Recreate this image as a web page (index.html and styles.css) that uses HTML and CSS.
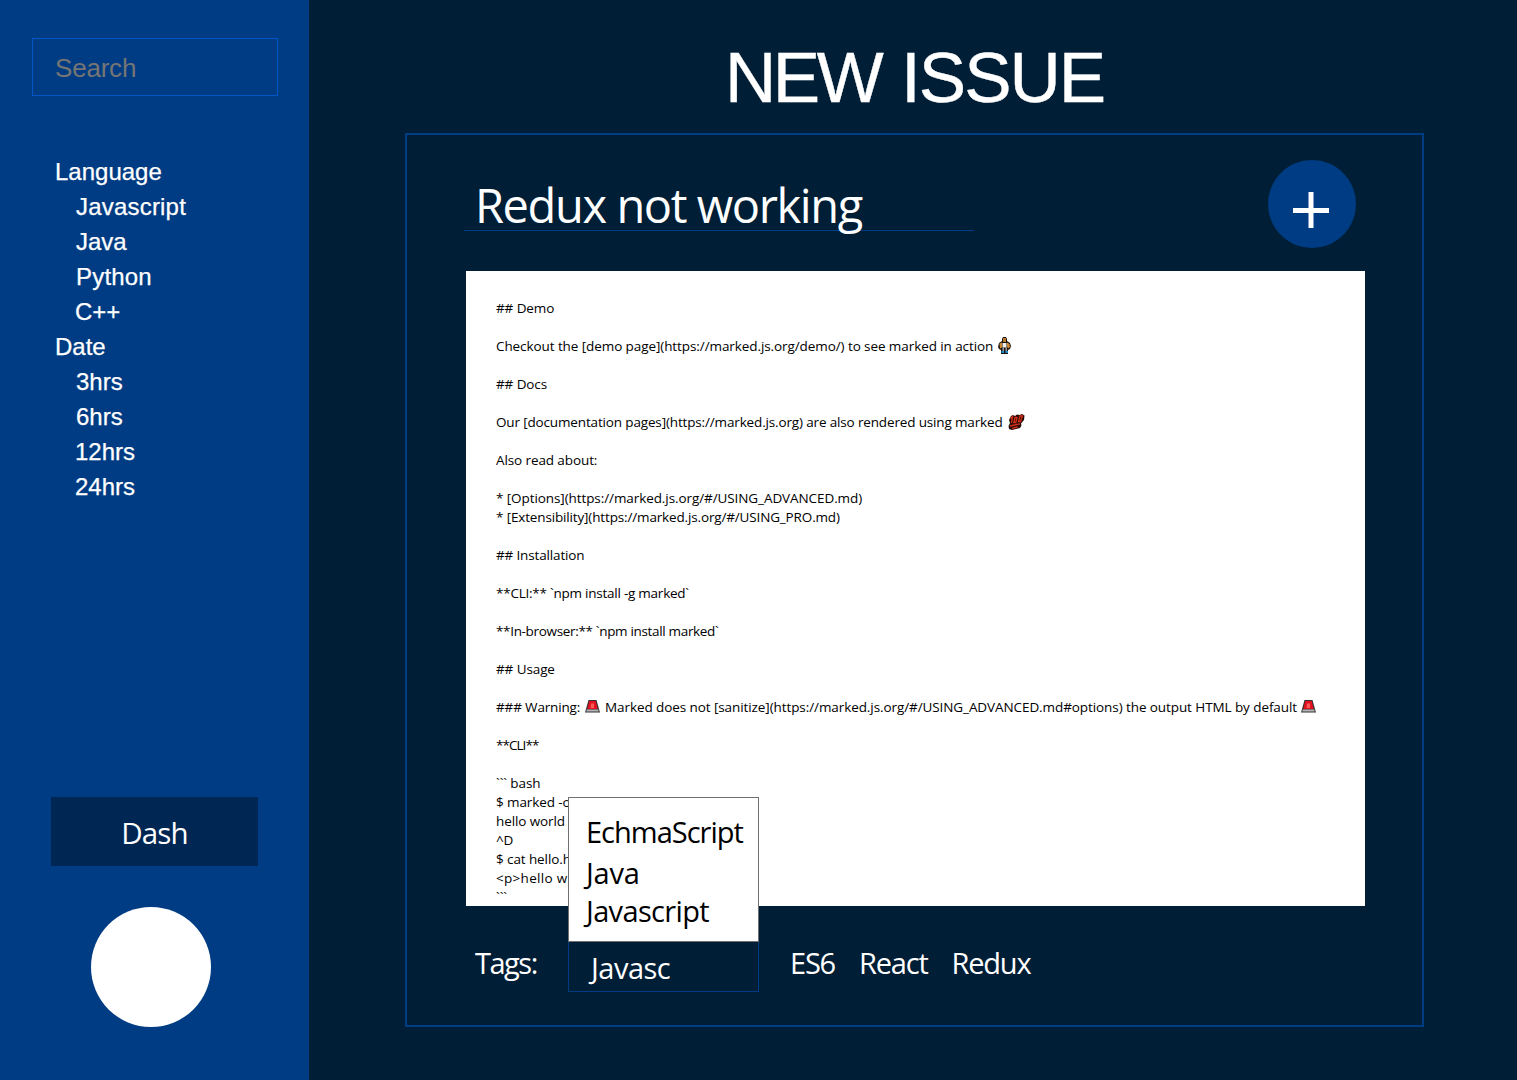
FILE: index.html
```html
<!DOCTYPE html>
<html lang="en">
<head>
<meta charset="utf-8">
<title>New Issue</title>
<link rel="stylesheet" href="styles.css">
</head>
<body>
<aside class="sidebar">
  <div class="search">Search</div>
  <nav class="filters">
    <span>Language</span>
    <a class="wide">Javascript</a>
    <a>Java</a>
    <a class="wide">Python</a>
    <a class="flush">C++</a>
    <span>Date</span>
    <a>3hrs</a>
    <a>6hrs</a>
    <a class="flush">12hrs</a>
    <a class="flush">24hrs</a>
  </nav>
  <div class="dash">Dash</div>
  <div class="avatar"></div>
</aside>
<main class="main">
  <h1 class="heading"><span class="heading-first">NEW</span> ISSUE</h1>
  <section class="panel">
    <header class="panel-head">
      <div class="issue-title">Redux not working</div>
      <div class="add">
        <svg width="88" height="88" viewBox="0 0 88 88"><path d="M25 50.500h36M43 32v36" stroke="#fff" stroke-width="5" fill="none"/></svg>
      </div>
    </header>
    <div class="editor">
      <p>## Demo</p>
      <p></p>
      <p class="t1">Checkout the [demo page](https://marked.js.org/demo/) to see marked in action <svg class="emoji man" viewBox="0 0 13 17"><path d="M5 0h3l1 2v2l3 2 1 3-1 3-2 1v4H3v-4l-2-1-1-2 1-4 3-2V2z" fill="#1a1410"/><path d="M5 1h3v4H5z" fill="#b9772c"/><path d="M1.500 6.500L4 5.500v5l-2 1zM9 5.500l2.500 1.500.5 3-2 1.500-1-2z" fill="#d08a30"/><path d="M4.500 6h4v4.500h-4z" fill="#f0eee8"/><path d="M4.500 10.500h1.500V14H4.500zM7.500 10.500H9V14H7.500z" fill="#999"/><path d="M3.500 14H6v2H3.500zM7.500 14H10v2H7.500z" fill="#1c8fc9"/></svg></p>
      <p></p>
      <p>## Docs</p>
      <p></p>
      <p class="t2">Our [documentation pages](https://marked.js.org) are also rendered using marked <svg class="emoji hundred" viewBox="0 0 17 16"><path d="M3 2l2-1 2 1 2-1.500L11.500 1 14 0l2.500 1.500L16 6l-3 3.500.5 2L12 14l-8 2-3-1-.5-3L2 9 1 6z" fill="#260b06"/><path d="M2.500 4.500L4.500 2.500 3.500 9M7 3.500L5.800 8.500h2l1.200-5zM12 2l-1.500 5.500h2L14.500 2zM2 12l10-2.200M4 14.300l5.500-1.300" stroke="#d8301b" stroke-width="1.300" fill="none"/></svg></p>
      <p></p>
      <p>Also read about:</p>
      <p></p>
      <p class="t1">* [Options](https://marked.js.org/#/USING_ADVANCED.md)</p>
      <p class="t2">* [Extensibility](https://marked.js.org/#/USING_PRO.md)</p>
      <p></p>
      <p class="t2">## Installation</p>
      <p></p>
      <p class="t3">**CLI:** `npm install -g marked`</p>
      <p></p>
      <p class="t4">**In-browser:** `npm install marked`</p>
      <p></p>
      <p>## Usage</p>
      <p></p>
      <p class="t1"><span class="t2">### Warning:</span> <svg class="emoji siren" viewBox="0 0 15 13"><path d="M3.500 0h8l2.500 9 1 3.500H0L1 9z" fill="#333"/><path d="M4.300 1h6.400L12.700 9H2.300z" fill="#e3101f"/><path d="M6 3.500h3V8H5.500z" fill="#ff5a58"/><path d="M1.700 9.500h11.600l.4 2H1.300z" fill="#b5b5b5"/></svg> Marked does not [sanitize](https://marked.js.org/#/USING_ADVANCED.md#options) the output HTML by default <svg class="emoji siren" viewBox="0 0 15 13"><path d="M3.500 0h8l2.500 9 1 3.500H0L1 9z" fill="#333"/><path d="M4.300 1h6.400L12.700 9H2.300z" fill="#e3101f"/><path d="M6 3.500h3V8H5.500z" fill="#ff5a58"/><path d="M1.700 9.500h11.600l.4 2H1.300z" fill="#b5b5b5"/></svg></p>
      <p></p>
      <p class="t5">**CLI**</p>
      <p></p>
      <p>``` bash</p>
      <p>$ marked -o</p>
      <p>hello world</p>
      <p>^D</p>
      <p>$ cat hello.h</p>
      <p class="t6">&lt;p&gt;hello w</p>
      <p>```</p>
    </div>
    <footer class="tags">
      <span class="tags-label">Tags:</span>
      <div class="tag-field">
        Javasc
        <div class="menu">
          <span class="menu-ecma">EchmaScript</span>
          <span class="menu-java">Java</span>
          <span class="menu-js">Javascript</span>
        </div>
      </div>
      <div class="tag-list"><span>ES6</span><span>React</span><span>Redux</span></div>
    </footer>
  </section>
</main>
</body>
</html>
```
FILE: styles.css
```css
* { box-sizing: border-box; }
body {
  margin: 0;
  height: 1080px;
  display: flex;
  overflow: hidden;
  background: #001e36;
  color: #fff;
  font-family: "Open Sans", "Noto Sans", sans-serif;
}
.sidebar {
  width: 309px;
  height: 1080px;
  padding: 38px 31px 53px 32px;
  display: flex;
  flex-direction: column;
  background: #003c83;
  font-family: "Liberation Sans", Arial, sans-serif;
}
.search {
  width: 246px;
  height: 58px;
  padding-left: 22px;
  border: 1px solid #0056c4;
  color: #757575;
  font-size: 26px;
  line-height: 58px;
  letter-spacing: -.2px;
}
.filters {
  margin-top: 58px;
  padding-left: 23px;
  display: flex;
  flex-direction: column;
  font-size: 24px;
  line-height: 35px;
  -webkit-text-stroke: .25px #fff;
}
.filters a { padding-left: 21px; }
.filters .wide { letter-spacing: .2px; }
.filters .flush { padding-left: 20px; }
.dash {
  width: 207px;
  height: 69px;
  margin: auto 0 41px 19px;
  background: #002753;
  font: 29.5px/71px "Open Sans", sans-serif;
  letter-spacing: -.9px;
  text-align: center;
}
.avatar {
  width: 120px;
  height: 120px;
  margin-left: 59px;
  border-radius: 50%;
  background: #fff;
}
.main {
  flex: 1;
  padding: 38px 93px 0 96px;
}
.heading {
  margin: 0;
  height: 95px;
  font: 400 71px/80px "Liberation Sans", Arial, sans-serif;
  letter-spacing: -2px;
  text-align: center;
  -webkit-text-stroke: .4px #fff;
}
.heading-first {
  margin-right: 3px;
  letter-spacing: -3.4px;
}
.panel {
  height: 894px;
  border: 2px solid #003c83;
  padding: 25px 57px 0;
}
.panel-head {
  display: flex;
  justify-content: space-between;
  padding-right: 9px;
  height: 111px;
}
.issue-title {
  width: 510px;
  height: 71px;
  padding: 14px 0 0 11px;
  border-bottom: 1px solid #003c83;
  font-size: 47px;
  line-height: 63px;
  letter-spacing: -1.4px;
  white-space: nowrap;
}
.add {
  width: 88px;
  height: 88px;
  border-radius: 50%;
  background: #003c83;
}
.editor {
  width: 899px;
  height: 635px;
  margin-left: 2px;
  padding: 28px 30px 0;
  overflow: hidden;
  background: #fff;
  color: #000;
  font-size: 13.5px;
}
.editor p {
  height: 19px;
  margin: 0;
  line-height: 19px;
  letter-spacing: -.1px;
  white-space: pre;
}
.editor .t1 { letter-spacing: -.085px; }
.editor .t2 { letter-spacing: -.15px; }
.editor .t3 { letter-spacing: -.24px; }
.editor .t4 { letter-spacing: -.33px; }
.editor .t5 { letter-spacing: -.95px; }
.editor .t6 { letter-spacing: .3px; }
.emoji { vertical-align: -3px; }
.man { width: 13px; height: 17px; margin-left: 1px; }
.hundred { width: 17px; height: 16px; margin-left: 2px; }
.siren { width: 15px; height: 13px; margin: 0 2px 0 1px; vertical-align: -1px; }
.tags {
  height: 86px;
  padding: 35px 0 0 11px;
  display: flex;
  font-size: 29px;
  white-space: nowrap;
}
.tags-label {
  width: 93px;
  line-height: 43px;
  letter-spacing: -1.5px;
}
.tag-field {
  position: relative;
  width: 191px;
  height: 51px;
  padding-left: 22px;
  border: 1px solid #003c83;
  line-height: 51px;
  letter-spacing: -.5px;
}
.menu {
  position: absolute;
  left: -1px;
  bottom: 49px;
  width: 191px;
  height: 145px;
  padding: 14px 0 0 17px;
  display: flex;
  flex-direction: column;
  border: 1px solid #707070;
  background: #fff;
  color: #000;
  line-height: 39px;
}
.menu-ecma { letter-spacing: -1px; }
.menu-java { margin: 2px 0 -1px; letter-spacing: -.2px; }
.menu-js { letter-spacing: -.65px; }
.tag-list {
  display: flex;
  gap: 24px;
  margin-left: 31px;
  line-height: 43px;
  letter-spacing: -1.2px;
}
```
